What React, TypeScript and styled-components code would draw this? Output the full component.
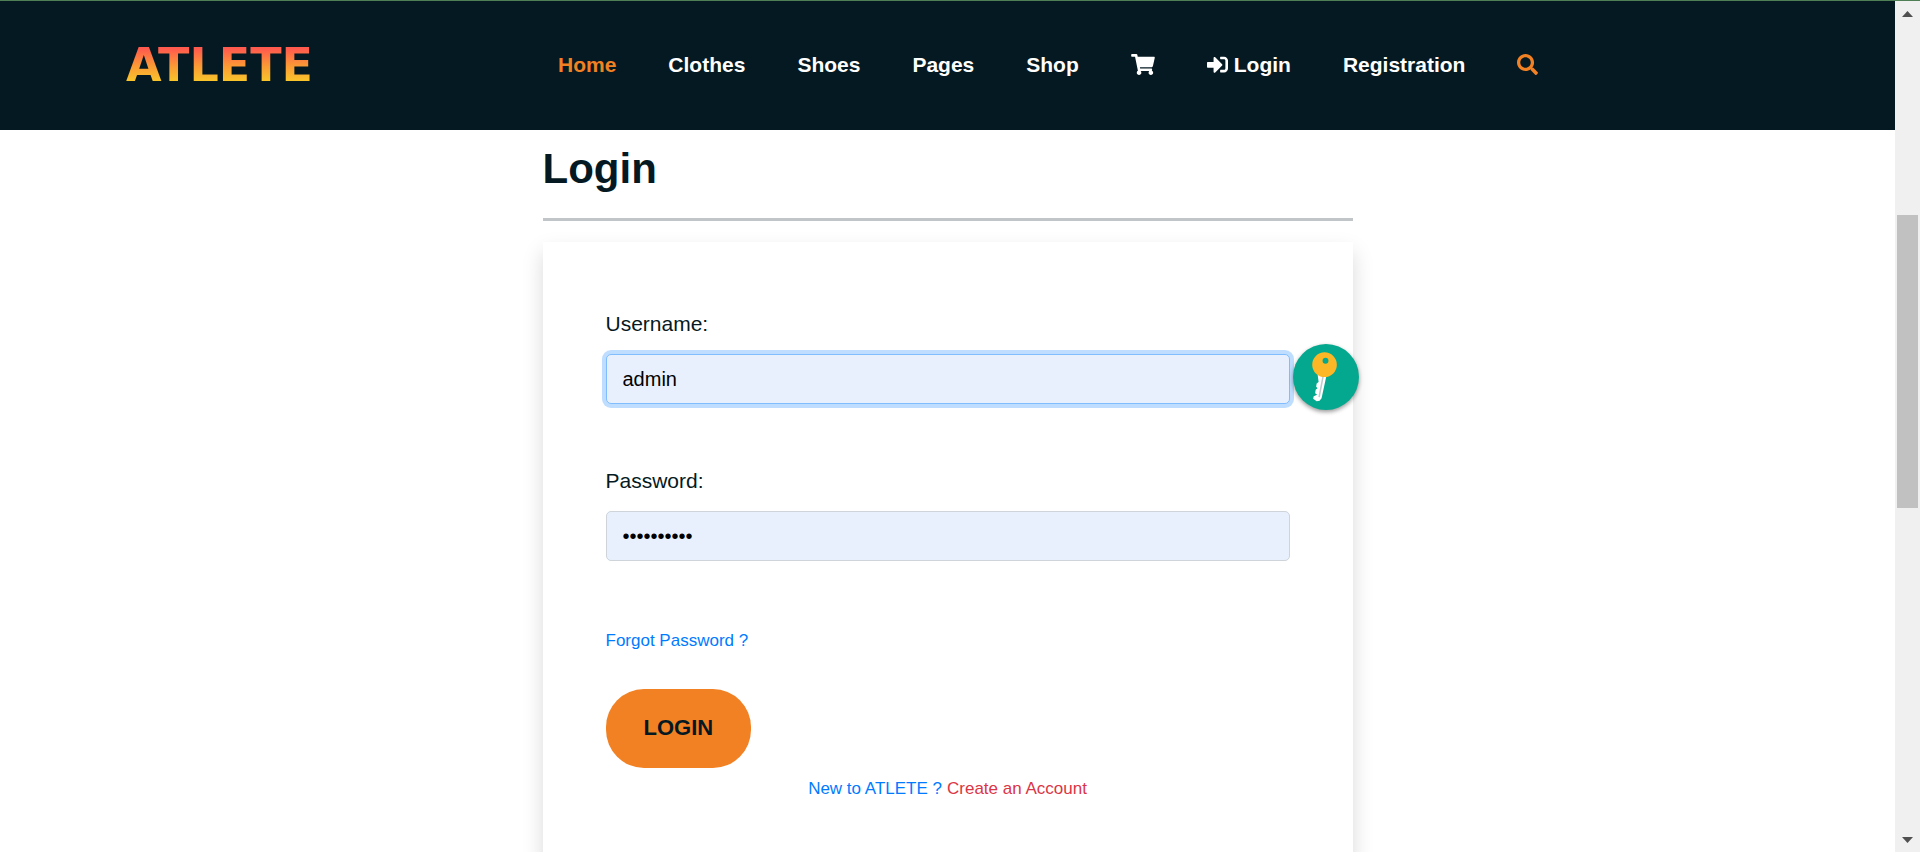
import React, { useState } from "react";
import styled, { createGlobalStyle, css } from "styled-components";
import { FaSearch, FaShoppingCart, FaSignInAlt } from "react-icons/fa";

const ink = "#051922";
const orange = "#f28123";

const GlobalStyle = createGlobalStyle`
  * { box-sizing: border-box; }
  body {
    margin: 0;
    background: #fff;
    color: ${ink};
    font-family: "Liberation Sans", Arial, sans-serif;
  }
`;

const Window = styled.div`
  display: flex;
  height: 100vh;
  overflow: hidden;
  border-top: 1px solid #4f7f55;
`;

const Page = styled.div`
  flex: 1;
  min-width: 0;
`;

const Header = styled.header`
  display: flex;
  align-items: center;
  height: 129px;
  padding: 0 126px 2px;
  background: ${ink};
`;

const Logo = styled.a`
  flex: 0 0 432px;
  font: bold 46px/48px "DejaVu Sans", sans-serif;
  text-decoration: none;

  span {
    background: linear-gradient(#ff5a4e 20%, #fb9a35 52%, #f8c82a 82%);
    background-clip: text;
    -webkit-background-clip: text;
    color: transparent;
  }
`;

const Menu = styled.nav`
  display: flex;
  align-items: center;
  gap: 52px;
`;

const MenuLink = styled.a<{ $active?: boolean }>`
  display: flex;
  align-items: center;
  gap: 6px;
  color: ${(p) => (p.$active ? orange : "#fff")};
  font-size: 21px;
  font-weight: 700;
  line-height: 32px;
  white-space: nowrap;
  text-decoration: none;
`;

const CartIcon = styled(FaShoppingCart)`
  width: 24px;
  height: 21px;
`;

const Main = styled.main`
  width: 100%;
  max-width: 810px;
  margin: 0 auto;
`;

const Title = styled.h1`
  margin: 0;
  padding: 14px 0 24px;
  border-bottom: 3px solid #c1c5c8;
  font-size: 42px;
  line-height: 50px;
`;

const Card = styled.form`
  margin-top: 21px;
  padding: 63px 63px 125px;
  background: #fff;
  box-shadow: 0 10px 20px rgba(0, 0, 0, 0.15);
`;

const Field = styled.div`
  margin-bottom: 58px;
`;

const Label = styled.label`
  display: block;
  margin-bottom: 11px;
  font-size: 21px;
  line-height: 38px;
`;

const InputWrap = styled.div`
  position: relative;
`;

const Input = styled.input<{ $focused?: boolean }>`
  display: block;
  width: 100%;
  height: 50px;
  padding: 0 16px;
  border: 1px solid #ced4da;
  border-radius: 5px;
  outline: none;
  background: #e8f0fe;
  color: #000;
  font-family: inherit;
  font-size: 20px;
  ${(p) =>
    p.$focused &&
    css`
      border-color: #80bdff;
      box-shadow: 0 0 0 4px rgba(0, 123, 255, 0.25);
    `}
`;

const KeyButton = styled.button`
  position: absolute;
  top: -10px;
  left: calc(100% + 3px);
  width: 66px;
  height: 66px;
  padding: 0;
  border: 0;
  border-radius: 50%;
  background: #04a88e;
  box-shadow: 0 2px 4px rgba(0, 0, 0, 0.4);

  svg { display: block; }
`;

const TextLink = styled.a<{ $danger?: boolean }>`
  color: ${(p) => (p.$danger ? "#dc3545" : "#007bff")};
  font-size: 17px;
  line-height: 26px;
  text-decoration: none;
`;

const Forgot = styled.div`
  display: flex;
  margin: 67px 0 35px;
`;

const Submit = styled.button`
  display: block;
  height: 79px;
  padding: 0 38px 2px;
  border: 0;
  border-radius: 38px;
  background: ${orange};
  color: ${ink};
  font-family: inherit;
  font-size: 22px;
  font-weight: 700;
`;

const SignUp = styled.div`
  display: flex;
  justify-content: center;
  gap: 5px;
  margin-top: 8px;
`;

const ScrollBar = styled.aside`
  display: flex;
  flex: 0 0 25px;
  flex-direction: column;
  background: #f0f0f0;
`;

const ScrollArrow = styled.button`
  display: flex;
  align-items: center;
  justify-content: center;
  height: 25px;
  padding: 0;
  border: 0;
  background: transparent;
`;

const Track = styled.div`
  display: grid;
  flex: 1;
  grid-template-rows: 189fr 293fr 319fr;
  padding: 0 2px;
`;

const Thumb = styled.div`
  grid-row: 2;
  background: #c1c1c1;
`;

const KeyIcon = () => (
  <svg width="66" height="66" viewBox="0 0 67 67" aria-hidden="true">
    <path
      d="M25 31 L34 32 L29 55 L27 57.500 L24 58 L20.500 55.500 L21 53 L24.500 51.500 L22.500 50 L23 46.500 L25 45 L23.500 43.500 L24 40 L26 38.500 Z"
      fill="#fff"
    />
    <path d="M30.500 33 L26.500 54" stroke="#bccaca" strokeWidth="1.500" />
    <path
      fillRule="evenodd"
      d="M32 8.500 a12.500 12.500 0 1 1 0 25 a12.500 12.500 0 1 1 0 -25 Z M33 14 a3 3 0 1 0 0 6 a3 3 0 1 0 0 -6 Z"
      fill="#fbb726"
    />
  </svg>
);

const links = ["Home", "Clothes", "Shoes", "Pages", "Shop"];

export default function App() {
  const [username, setUsername] = useState("admin");
  const [password, setPassword] = useState("athlete123");

  return (
    <>
      <GlobalStyle />
      <Window>
        <Page>
          <Header>
            <Logo href="#"><span>ATLETE</span></Logo>
            <Menu>
              {links.map((name) => (
                <MenuLink key={name} href="#" $active={name === "Home"}>{name}</MenuLink>
              ))}
              <MenuLink href="#" aria-label="Cart"><CartIcon /></MenuLink>
              <MenuLink href="#"><FaSignInAlt />Login</MenuLink>
              <MenuLink href="#">Registration</MenuLink>
              <MenuLink href="#" $active aria-label="Search"><FaSearch /></MenuLink>
            </Menu>
          </Header>
          <Main>
            <Title>Login</Title>
            <Card onSubmit={(e) => e.preventDefault()}>
              <Field>
                <Label htmlFor="username">Username:</Label>
                <InputWrap>
                  <Input id="username" $focused value={username} onChange={(e) => setUsername(e.target.value)} />
                  <KeyButton type="button" aria-label="Fill in saved login"><KeyIcon /></KeyButton>
                </InputWrap>
              </Field>
              <Field>
                <Label htmlFor="password">Password:</Label>
                <Input id="password" type="password" value={password} onChange={(e) => setPassword(e.target.value)} />
              </Field>
              <Forgot><TextLink href="#">Forgot Password ?</TextLink></Forgot>
              <Submit type="submit">LOGIN</Submit>
              <SignUp>
                <TextLink href="#">New to ATLETE ?</TextLink>
                <TextLink href="#" $danger>Create an Account</TextLink>
              </SignUp>
            </Card>
          </Main>
        </Page>
        <ScrollBar>
          <ScrollArrow aria-label="Scroll up">
            <svg width="11" height="6" viewBox="0 0 11 6"><path d="M0 6 L5.500 0 L11 6 Z" fill="#505050" /></svg>
          </ScrollArrow>
          <Track><Thumb /></Track>
          <ScrollArrow aria-label="Scroll down">
            <svg width="11" height="6" viewBox="0 0 11 6"><path d="M0 0 L5.500 6 L11 0 Z" fill="#505050" /></svg>
          </ScrollArrow>
        </ScrollBar>
      </Window>
    </>
  );
}
